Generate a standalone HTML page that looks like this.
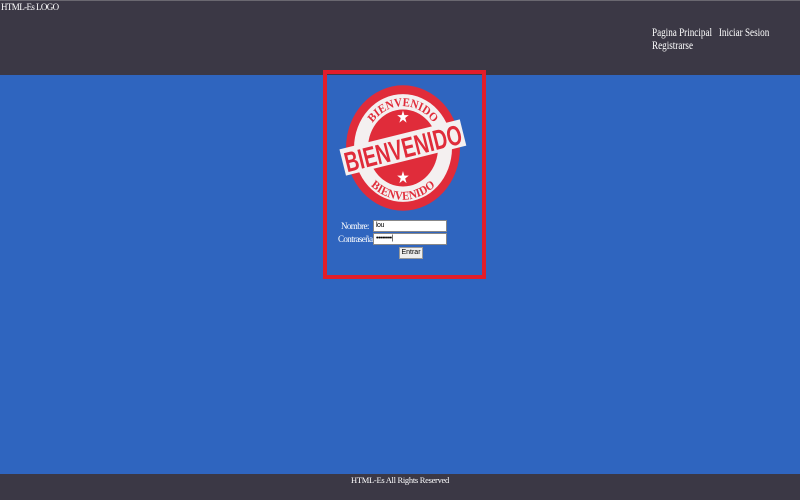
<!DOCTYPE html>
<html><head><meta charset="utf-8"><style>
*{margin:0;padding:0;box-sizing:border-box}
body{width:800px;height:500px;overflow:hidden;background:#2f65bf;font-family:"Liberation Serif",serif;color:#fff;position:relative}
#hdr{position:absolute;left:0;top:0;width:800px;height:75px;background:#3b3845;border-top:1px solid #6a6870}
#logo{position:absolute;left:1px;top:1px;font-size:9px;letter-spacing:-0.6px}
#nav{position:absolute;left:652px;top:25px;font-size:12px;line-height:13px;white-space:nowrap;transform:scaleX(0.76);transform-origin:0 0}
#box{position:absolute;left:323px;top:70px;width:163px;height:209px;border:4px solid #e21d2a}
#ftr{position:absolute;left:0;top:474px;width:800px;height:26px;background:#3b3845;text-align:center;font-size:8.5px;padding-top:1px;letter-spacing:-0.3px}
.lbl{position:absolute;font-size:9px;letter-spacing:-0.6px;white-space:nowrap}
.inp{position:absolute;background:#fff;border:1px solid #888;height:12px;color:#000;font-family:"Liberation Sans",sans-serif;font-size:7px;line-height:10px;padding-left:2px;letter-spacing:-0.5px}
#btn{position:absolute;left:399px;top:247px;width:24px;height:12px;background:#eee;border:1px solid #999;color:#000;font-family:"Liberation Sans",sans-serif;font-size:7px;text-align:center;line-height:10px}
</style></head><body>
<div id="hdr"><div id="logo">HTML-Es LOGO</div>
<div id="nav">Pagina Principal&nbsp;&nbsp; Iniciar Sesion<br>Registrarse</div></div>
<div id="box"></div>
<svg style="position:absolute;left:333px;top:78px" width="140" height="140" viewBox="0 0 140 140">
<g transform="translate(70 70) scale(1 1.1) translate(-70 -70)">
<circle cx="70" cy="70" r="57" fill="#e02c3a"/>
<circle cx="70" cy="70" r="49" fill="#f4f0f0"/>
<circle cx="70" cy="70" r="35" fill="#e02c3a"/>
<defs><path id="tp" d="M32,70 A38,38 0 0 1 108,70"/><path id="bp" d="M23,70 A47,47 0 0 0 117,70"/></defs>
<text font-family="Liberation Serif,serif" font-size="11" font-weight="bold" fill="#e02c3a"><textPath href="#tp" startOffset="50%" text-anchor="middle">BIENVENIDO</textPath></text>
<text font-family="Liberation Serif,serif" font-size="11" font-weight="bold" fill="#e02c3a"><textPath href="#bp" startOffset="50%" text-anchor="middle">BIENVENIDO</textPath></text>
<text x="70" y="47" fill="#fff" font-size="15" text-anchor="middle">★</text>
<text x="70" y="102" fill="#fff" font-size="15" text-anchor="middle">★</text>
</g>
<g transform="rotate(-14 70 70)">
<rect x="8" y="56" width="124" height="27" fill="#f4f0f0"/>
<text x="70" y="80" fill="#e02c3a" font-family="Liberation Sans,sans-serif" font-weight="bold" font-size="28" text-anchor="middle" textLength="120" lengthAdjust="spacingAndGlyphs">BIENVENIDO</text>
</g>
</svg>
<div class="lbl" style="left:341px;top:221px">Nombre:</div>
<div class="lbl" style="left:338px;top:234px">Contraseña:</div>
<div class="inp" style="left:373px;top:220px;width:74px">lou</div>
<div class="inp" style="left:373px;top:233px;width:74px">••••••••|</div>
<div id="btn">Entrar</div>
<div id="ftr">HTML-Es All Rights Reserved</div>
</body></html>
